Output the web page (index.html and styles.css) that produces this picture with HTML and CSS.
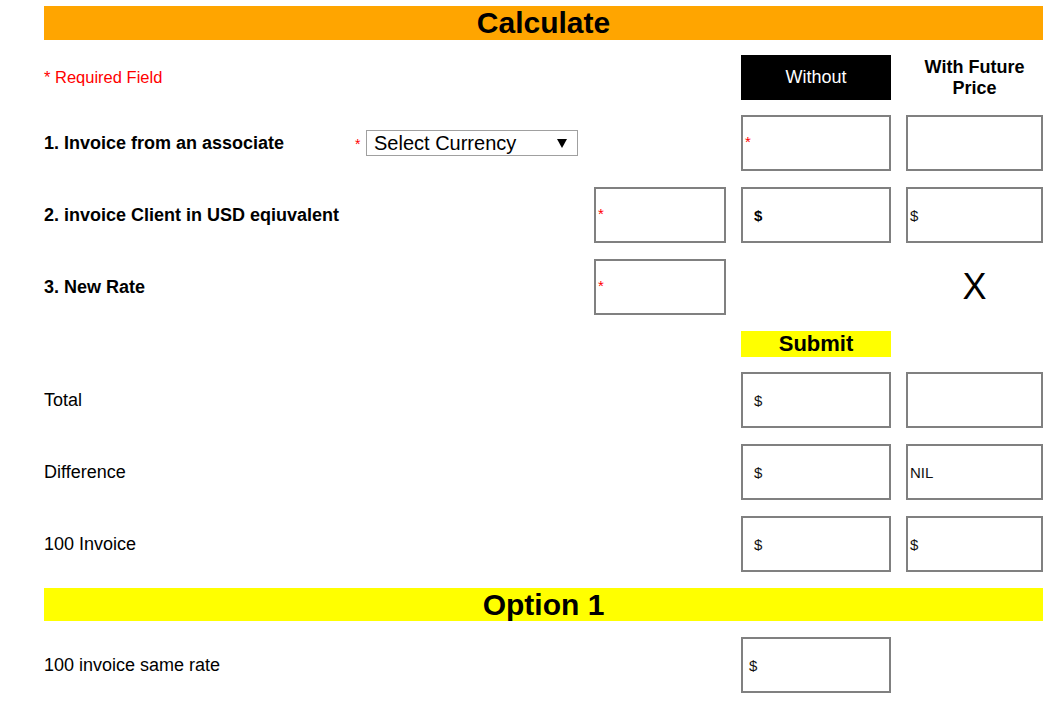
FILE: index.html
```html
<!DOCTYPE html>
<html>
<head>
<meta charset="utf-8">
<title>Calculate</title>
<link rel="stylesheet" href="styles.css">
</head>
<body>
<div class="page">
  <div class="bar bar-orange">Calculate</div>
  <div class="grid">
    <!-- header row -->
    <div class="cell-label required">* Required Field</div>
    <div></div>
    <div class="col-head dark">Without</div>
    <div class="col-head">With Future<br>Price</div>

    <!-- row 1 -->
    <div class="cell-label first-row">
      <span class="lbl-bold lbl-fixed">1. Invoice from an associate</span>
      <span class="req-star">*</span>
      <div class="fake-select">
        <span>Select Currency</span>
        <svg class="arrow" width="10" height="9" viewBox="0 0 10 9"><polygon points="0,0 10,0 5,9" fill="#000"/></svg>
      </div>
    </div>
    <div></div>
    <div class="box pad-xs"><span class="star">*</span></div>
    <div class="box"></div>

    <!-- row 2 -->
    <div class="cell-label lbl-bold">2. invoice Client in USD eqiuvalent</div>
    <div class="box pad-xs"><span class="star">*</span></div>
    <div class="box pad-l"><span class="bold">$</span></div>
    <div class="box pad-xs"><span class="val">$</span></div>

    <!-- row 3 -->
    <div class="cell-label lbl-bold">3. New Rate</div>
    <div class="box pad-xs"><span class="star">*</span></div>
    <div></div>
    <div class="close-x">X</div>

    <!-- submit -->
    <div></div>
    <div></div>
    <div class="submit">Submit</div>
    <div></div>

    <!-- total -->
    <div class="cell-label">Total</div>
    <div></div>
    <div class="box pad-l"><span class="val">$</span></div>
    <div class="box"></div>

    <!-- difference -->
    <div class="cell-label">Difference</div>
    <div></div>
    <div class="box pad-l"><span class="val">$</span></div>
    <div class="box pad-xs"><span class="val">NIL</span></div>

    <!-- 100 invoice -->
    <div class="cell-label">100 Invoice</div>
    <div></div>
    <div class="box pad-l"><span class="val">$</span></div>
    <div class="box pad-xs"><span class="val">$</span></div>

    <!-- option 1 -->
    <div class="bar bar-yellow span-all">Option 1</div>

    <!-- last row -->
    <div class="cell-label">100 invoice same rate</div>
    <div></div>
    <div class="box pad-m"><span class="val">$</span></div>
    <div></div>
  </div>
</div>
</body>
</html>
```

FILE: styles.css
```css
* { box-sizing: border-box; }

body {
  margin: 0;
  background: #fff;
  font-family: "Liberation Sans", Arial, sans-serif;
  color: #000;
}

.page {
  padding: 6px 0 0 44px;
  width: 1043px;
}

.bar {
  height: 34px;
  display: flex;
  align-items: center;
  justify-content: center;
  font-weight: bold;
  font-size: 30px;
}

.bar-orange {
  background: #ffa500;
  margin-bottom: 15px;
}

.bar-yellow {
  background: #ffff00;
  height: 33px;
}

.grid {
  display: grid;
  grid-template-columns: 535px 132px 150px 137px;
  grid-template-rows: 44px 56px 56px 56px 25px 56px 56px 56px 33px 56px;
  column-gap: 15px;
  row-gap: 16px;
}

.span-all { grid-column: 1 / -1; }

.cell-label {
  display: flex;
  align-items: center;
  font-size: 18px;
}

.required {
  color: #ff0000;
  font-size: 16.5px;
}

.lbl-bold { font-weight: bold; }

.lbl-fixed { width: 311px; }

.req-star {
  color: #ff0000;
  font-size: 14px;
  width: 11px;
  margin-top: 2px;
}

.fake-select {
  width: 212px;
  height: 26px;
  border: 1px solid #a0a0a0;
  display: flex;
  align-items: center;
  justify-content: space-between;
  padding: 0 10px 0 7px;
  font-size: 20px;
  background: #fff;
}

.arrow {
  display: block;
  margin-top: 1px;
}

.col-head {
  height: 45px;
  display: flex;
  align-items: center;
  justify-content: center;
  text-align: center;
  font-size: 18px;
  font-weight: bold;
  line-height: 21px;
}

.col-head.dark {
  background: #000;
  color: #fff;
  font-weight: normal;
}

.box {
  border: 2px solid #808080;
  height: 56px;
  display: flex;
  align-items: center;
  font-size: 15px;
}

.pad-xs { padding-left: 2px; }
.pad-m { padding-left: 6px; }
.pad-l { padding-left: 11px; }

.star {
  color: #ff0000;
  font-size: 15px;
  margin-top: -3px;
}

.bold { font-weight: bold; }

.val { color: #111; }

.close-x {
  display: flex;
  align-items: center;
  justify-content: center;
  font-size: 36px;
}

.submit {
  height: 26px;
  background: #ffff00;
  display: flex;
  align-items: center;
  justify-content: center;
  font-size: 22px;
  font-weight: bold;
}
```
